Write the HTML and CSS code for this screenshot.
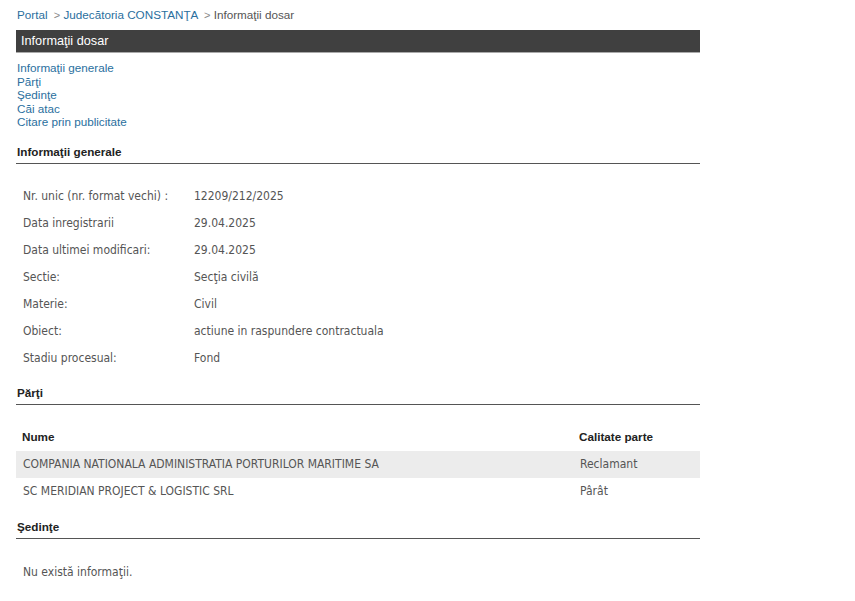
FILE: index.html
```html
<!DOCTYPE html>
<html lang="ro">
<head>
    <meta charset="UTF-8">
    <title>Informaţii dosar</title>
    <link rel="stylesheet" href="styles.css">
</head>
<body>
    <div class="page">
        <div class="breadcrumb">
            <a href="#">Portal</a> <span class="sep">&gt;</span> <a href="#">Judecătoria CONSTANŢA</a> <span class="sep">&gt;</span> Informaţii dosar
        </div>

        <h1 class="title-bar">Informaţii dosar</h1>

        <ul class="toc">
            <li><a href="#generale">Informaţii generale</a></li>
            <li><a href="#parti">Părţi</a></li>
            <li><a href="#sedinte">Şedinţe</a></li>
            <li><a href="#">Căi atac</a></li>
            <li><a href="#">Citare prin publicitate</a></li>
        </ul>

        <h2 class="section" id="generale">Informaţii generale</h2>
        <table class="info">
            <tr><td class="label">Nr. unic (nr. format vechi) :</td><td>12209/212/2025</td></tr>
            <tr><td class="label">Data inregistrarii</td><td>29.04.2025</td></tr>
            <tr><td class="label">Data ultimei modificari:</td><td>29.04.2025</td></tr>
            <tr><td class="label">Sectie:</td><td>Secţia civilă</td></tr>
            <tr><td class="label">Materie:</td><td>Civil</td></tr>
            <tr><td class="label">Obiect:</td><td>actiune in raspundere contractuala</td></tr>
            <tr><td class="label">Stadiu procesual:</td><td>Fond</td></tr>
        </table>

        <h2 class="section section-parti" id="parti">Părţi</h2>
        <table class="parti">
            <thead>
                <tr><th>Nume</th><th class="calitate">Calitate parte</th></tr>
            </thead>
            <tbody>
                <tr class="alt"><td>COMPANIA NATIONALA ADMINISTRATIA PORTURILOR MARITIME SA</td><td class="calitate">Reclamant</td></tr>
                <tr><td>SC MERIDIAN PROJECT &amp; LOGISTIC SRL</td><td class="calitate">Pârât</td></tr>
            </tbody>
        </table>

        <h2 class="section section-sedinte" id="sedinte">Şedinţe</h2>
        <p class="empty">Nu există informaţii.</p>
    </div>
</body>
</html>
```

FILE: styles.css
```css
body {
    margin: 0;
    background: #fff;
    font-family: "Liberation Sans", Arial, sans-serif;
    font-size: 11.7px;
    color: #333;
}
.page {
    width: 684px;
    margin-left: 16px;
    padding-top: 8px;
}
a {
    color: #2a6f9e;
    text-decoration: none;
}
.breadcrumb {
    padding-left: 1px;
    color: #555;
    line-height: 14px;
}
.breadcrumb .sep {
    color: #888;
    font-size: 11px;
    margin: 0 0 0 3px;
}
.title-bar {
    margin: 8px 0 0;
    height: 22px;
    padding-left: 5px;
    background: #404040;
    border-bottom: 1px solid #aaa;
    color: #fff;
    font-size: 12.7px;
    font-weight: normal;
    line-height: 22px;
}
.toc {
    list-style: none;
    margin: 8px 0 0;
    padding: 0 0 0 1px;
    line-height: 13.5px;
}
.section {
    margin: 16px 0 0;
    padding: 0 0 4px 1px;
    border-bottom: 1px solid #555;
    font-size: 11.7px;
    font-weight: bold;
    color: #222;
    line-height: 14px;
}
.section-parti {
    margin-top: 14px;
}
.section-sedinte {
    margin-top: 15px;
}
.info,
.parti {
    width: 100%;
    border-collapse: collapse;
    font-family: "DejaVu Sans Condensed", "DejaVu Sans", Tahoma, sans-serif;
    font-size: 12px;
    color: #555;
}
.info {
    margin-top: 19px;
}
.info td {
    height: 27px;
    padding: 0 0 0 7px;
}
.info td.label {
    width: 164px;
}
.parti {
    margin-top: 17px;
}
.parti th {
    height: 29px;
    padding: 0 0 0 6px;
    text-align: left;
    font-family: "Liberation Sans", Arial, sans-serif;
    font-size: 11.7px;
    color: #222;
}
.parti td {
    height: 27px;
    padding: 0 0 0 7px;
}
.parti .calitate {
    width: 120px;
}
.parti tr.alt td {
    background: #ececec;
}
.empty {
    margin: 26px 0 0;
    padding-left: 7px;
    font-family: "DejaVu Sans Condensed", "DejaVu Sans", Tahoma, sans-serif;
    font-size: 12px;
    color: #555;
}
```
